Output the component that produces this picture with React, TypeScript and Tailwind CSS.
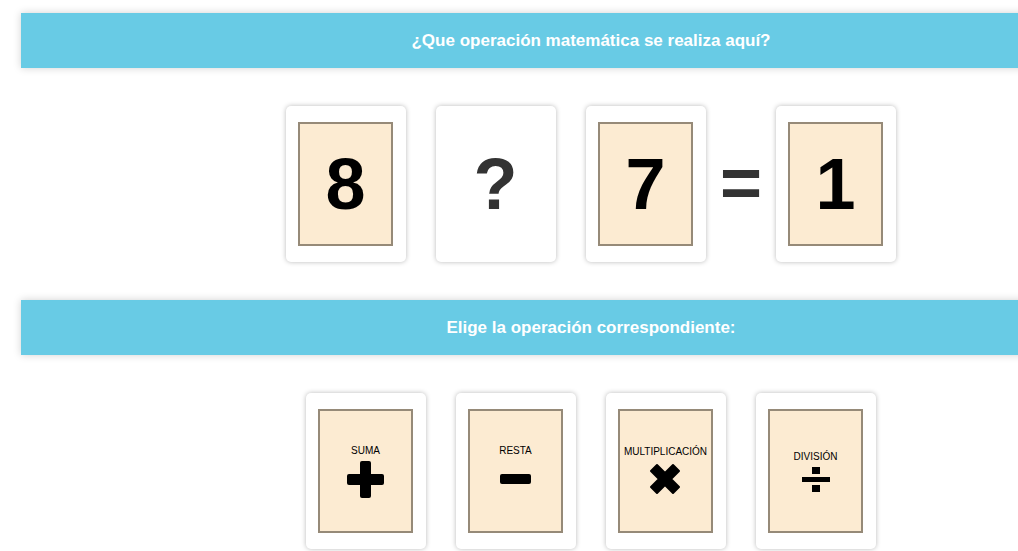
import React, { ReactNode } from "react";

const FONT = { fontFamily: '"Liberation Sans", Arial, sans-serif' };

function Banner({ children }: { children: ReactNode }) {
    return (
        <div className="w-[1140px] h-[55px] bg-[#68cbe5] shadow-[0_0_8px_rgba(0,0,0,0.18)] flex items-center justify-center text-white font-bold text-[17px]">
            {children}
        </div>
    );
}

function Card({ children, plain }: { children: ReactNode; plain?: boolean }) {
    return (
        <div className="w-[120px] h-[156px] bg-white rounded-[5px] shadow-[0_0_5px_rgba(0,0,0,0.28)] pt-[16px] pl-[12px]">
            {plain ? (
                <div className="w-[95px] h-[124px] flex items-center justify-center">{children}</div>
            ) : (
                <div className="w-[95px] h-[124px] bg-[#fcebd2] border-2 border-[#968a78] flex items-center justify-center">
                    {children}
                </div>
            )}
        </div>
    );
}

function Digit({ value }: { value: string }) {
    return <span className="text-[72px] font-bold leading-none text-black">{value}</span>;
}

function PlusIcon() {
    return (
        <svg width="37" height="37" viewBox="0 0 37 37">
            <rect x="13" y="0" width="11" height="37" rx="2" fill="#000" />
            <rect x="0" y="13" width="37" height="11" rx="2" fill="#000" />
        </svg>
    );
}

function MinusIcon() {
    return (
        <svg width="37" height="37" viewBox="0 0 37 37">
            <rect x="3" y="13" width="31" height="10" rx="2" fill="#000" />
        </svg>
    );
}

function TimesIcon() {
    return (
        <svg width="34" height="34" viewBox="0 0 34 34">
            <path d="M3 9 L9 3 L17 11 L25 3 L31 9 L23 17 L31 25 L25 31 L17 23 L9 31 L3 25 L11 17 Z" fill="#000" stroke="#000" strokeWidth="2" strokeLinejoin="round" />
        </svg>
    );
}

function DivideIcon() {
    return (
        <svg width="28" height="25" viewBox="0 0 28 25">
            <rect x="10" y="0" width="8" height="7" fill="#000" />
            <rect x="0" y="10" width="28" height="5" fill="#000" />
            <rect x="10" y="18" width="8" height="7" fill="#000" />
        </svg>
    );
}

function OpCard({ label, icon }: { label: string; icon: ReactNode }) {
    return (
        <Card>
            <div className="flex flex-col items-center gap-[4px]">
                <span className="text-[10px] leading-[12px] text-black">{label}</span>
                {icon}
            </div>
        </Card>
    );
}

export default function App() {
    return (
        <div className="w-full h-[551px] overflow-hidden bg-white" style={FONT}>
            <div className="w-[1140px] ml-[21px] pt-[13px] flex flex-col">
                <Banner>¿Que operación matemática se realiza aquí?</Banner>

                <div className="flex flex-row justify-center items-center mt-[38px]">
                    <Card>
                        <Digit value="8" />
                    </Card>
                    <div className="w-[30px]" />
                    <Card plain>
                        <span className="text-[72px] font-bold leading-none text-[#333]">?</span>
                    </Card>
                    <div className="w-[30px]" />
                    <Card>
                        <Digit value="7" />
                    </Card>
                    <div className="w-[70px] flex justify-center">
                        <span className="text-[72px] font-bold leading-none text-[#333] -mt-[4px]">=</span>
                    </div>
                    <Card>
                        <Digit value="1" />
                    </Card>
                </div>

                <div className="mt-[38px]">
                    <Banner>Elige la operación correspondiente:</Banner>
                </div>

                <div className="flex flex-row justify-center gap-[30px] mt-[38px]">
                    <OpCard label="SUMA" icon={<PlusIcon />} />
                    <OpCard label="RESTA" icon={<MinusIcon />} />
                    <OpCard label="MULTIPLICACIÓN" icon={<TimesIcon />} />
                    <OpCard label="DIVISIÓN" icon={<DivideIcon />} />
                </div>
            </div>
        </div>
    );
}
